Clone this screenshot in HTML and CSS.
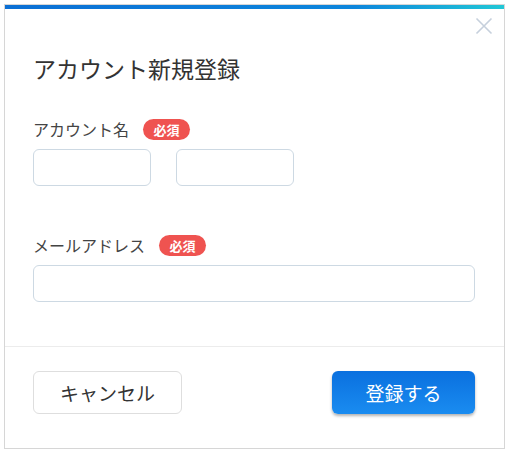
FILE: index.html
```html
<!DOCTYPE html>
<html lang="ja">
<head>
    <meta charset="UTF-8">
    <meta name="viewport" content="width=device-width, initial-scale=1.0">
    <title>アカウント新規登録</title>
    <link rel="stylesheet" href="styles.css">
</head>
<body>
    <div class="dialog">
        <div class="top-bar"></div>
        <button class="close-btn" aria-label="閉じる">
            <svg width="18" height="18" viewBox="0 0 18 18">
                <path d="M1.5 1.5 L16.5 16.5 M16.5 1.5 L1.5 16.5" stroke="#c6d0dc" stroke-width="1.6" fill="none"/>
            </svg>
        </button>
        <div class="dialog-body">
            <h1 class="title">アカウント新規登録</h1>

            <div class="field field-name">
                <div class="label-row">
                    <span class="label">アカウント名</span>
                    <span class="badge">必須</span>
                </div>
                <div class="name-inputs">
                    <input type="text" class="input input-short">
                    <input type="text" class="input input-short">
                </div>
            </div>

            <div class="field field-mail">
                <div class="label-row">
                    <span class="label">メールアドレス</span>
                    <span class="badge">必須</span>
                </div>
                <input type="email" class="input input-wide">
            </div>
        </div>
        <div class="dialog-footer">
            <button class="btn btn-cancel">キャンセル</button>
            <button class="btn btn-submit">登録する</button>
        </div>
    </div>
</body>
</html>
```

FILE: styles.css
```css
body {
    margin: 0;
    padding: 4px 6px 4px 4px;
    background-color: #fff;
    font-family: "Noto Sans CJK JP", "Noto Sans", sans-serif;
    color: #333;
}
.dialog {
    position: relative;
    border: 1px solid #d6d6d6;
    background-color: #fff;
}
.top-bar {
    height: 4px;
    background: linear-gradient(to right, #0b6fd4, #0d86dc 70%, #21c7d6);
}
.close-btn {
    position: absolute;
    top: 12px;
    right: 11px;
    width: 18px;
    height: 18px;
    padding: 0;
    border: none;
    background: none;
    cursor: pointer;
}
.close-btn svg {
    display: block;
}
.dialog-body {
    padding: 44px 29px 44px 28px;
    border-bottom: 1px solid #ececec;
}
.title {
    margin: 0;
    font-size: 23px;
    font-weight: normal;
    line-height: 30px;
    color: #333;
}
.field-name {
    margin-top: 34px;
}
.field-mail {
    margin-top: 47px;
}
.label-row {
    display: flex;
    align-items: center;
    gap: 14px;
    height: 24px;
    margin-bottom: 8px;
}
.label {
    font-size: 16px;
    color: #444;
}
.badge {
    display: inline-flex;
    align-items: center;
    justify-content: center;
    width: 47px;
    height: 21px;
    border-radius: 11px;
    background-color: #ef5350;
    color: #fff;
    font-size: 13px;
    font-weight: bold;
}
.name-inputs {
    display: flex;
    gap: 25px;
}
.input {
    box-sizing: border-box;
    height: 37px;
    border: 1px solid #cdd9e3;
    border-radius: 6px;
    background-color: #fff;
    padding: 0 10px;
    font-family: inherit;
    font-size: 15px;
}
.input-short {
    width: 118px;
}
.input-wide {
    display: block;
    width: 100%;
}
.dialog-footer {
    display: flex;
    justify-content: space-between;
    padding: 24px 29px 34px 28px;
}
.btn {
    box-sizing: border-box;
    height: 43px;
    border-radius: 6px;
    font-family: inherit;
    font-size: 19px;
    cursor: pointer;
}
.btn-cancel {
    width: 149px;
    border: 1px solid #dedede;
    background-color: #fff;
    color: #333;
}
.btn-submit {
    width: 143px;
    border: none;
    background: linear-gradient(to bottom, #0a70df, #1a8cf0);
    color: #fff;
    box-shadow: 0 2px 3px rgba(0, 0, 0, 0.3);
}
```
